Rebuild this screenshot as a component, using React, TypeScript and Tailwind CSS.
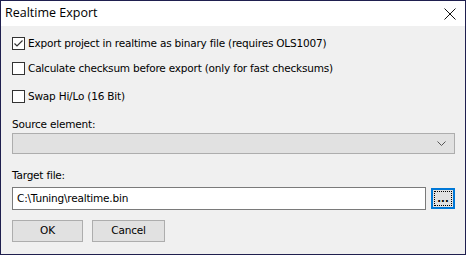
import React from "react";

function CheckBox({ checked }: { checked?: boolean }) {
  return (
    <div className="w-[13px] h-[13px] border border-[#333333] bg-white flex items-center justify-center shrink-0">
      {checked && (
        <svg width="11" height="11" viewBox="0 0 11 11">
          <path d="M1.5 5.5 L4 8 L9.5 2.5" stroke="#333333" strokeWidth="1.2" fill="none" />
        </svg>
      )}
    </div>
  );
}

export default function App() {
  return (
    <div className="w-[466px] h-[255px] border border-[#1f1f4f] bg-[#f0f0f0] flex flex-col text-[10.5px] tracking-[-0.2px] text-black" style={{ fontFamily: "'DejaVu Sans', sans-serif" }}>
      <div className="h-[25px] bg-white flex items-center justify-between pl-[4px] pr-[9px] shrink-0">
        <span className="text-[12.5px] tracking-normal text-black" style={{ fontFamily: "'Open Sans', 'Liberation Sans', sans-serif" }}>Realtime Export</span>
        <svg width="12" height="12" viewBox="0 0 12 12">
          <path d="M0.5 0.5 L11.5 11.5 M11.5 0.5 L0.5 11.5" stroke="#111" strokeWidth="1" />
        </svg>
      </div>
      <div className="flex flex-col pl-[11px] pr-[10px] pt-[11px]">
        <div className="flex items-center gap-[3px] h-[13px]">
          <CheckBox checked />
          <span>Export project in realtime as binary file (requires OLS1007)</span>
        </div>
        <div className="flex items-center gap-[3px] h-[13px] mt-[12px]">
          <CheckBox />
          <span>Calculate checksum before export (only for fast checksums)</span>
        </div>
        <div className="flex items-center gap-[3px] h-[13px] mt-[15px]">
          <CheckBox />
          <span>Swap Hi/Lo (16 Bit)</span>
        </div>
        <div className="h-[15px] mt-[14px] flex items-center">Source element:</div>
        <div className="h-[21px] mt-[1px] border border-[#adadad] bg-[#e1e1e1] flex items-center justify-end pr-[8px]">
          <svg width="9" height="5" viewBox="0 0 9 5">
            <path d="M0.5 0.5 L4.5 4.5 L8.5 0.5" stroke="#555" strokeWidth="1" fill="none" />
          </svg>
        </div>
        <div className="h-[15px] mt-[14px] flex items-center">Target file:</div>
        <div className="flex items-center mt-[4px] gap-[5px]">
          <div className="h-[23px] w-[414px] border border-[#7a7a7a] bg-white flex items-center pl-[4px]">
            C:\Tuning\realtime.bin
          </div>
          <div className="h-[21px] w-[24px] border-2 border-[#0078d7] bg-[#e1e1e1] flex items-end justify-center p-[1px]">
            <div className="w-full h-full border border-dotted border-black flex items-end justify-center pb-[1px] text-[10px] leading-[10px] font-bold tracking-normal">
              ...
            </div>
          </div>
        </div>
        <div className="flex gap-[9px] mt-[10px]">
          <div className="w-[71px] h-[22px] border border-[#adadad] bg-[#e1e1e1] flex items-center justify-center">OK</div>
          <div className="w-[73px] h-[22px] border border-[#adadad] bg-[#e1e1e1] flex items-center justify-center">Cancel</div>
        </div>
      </div>
    </div>
  );
}
